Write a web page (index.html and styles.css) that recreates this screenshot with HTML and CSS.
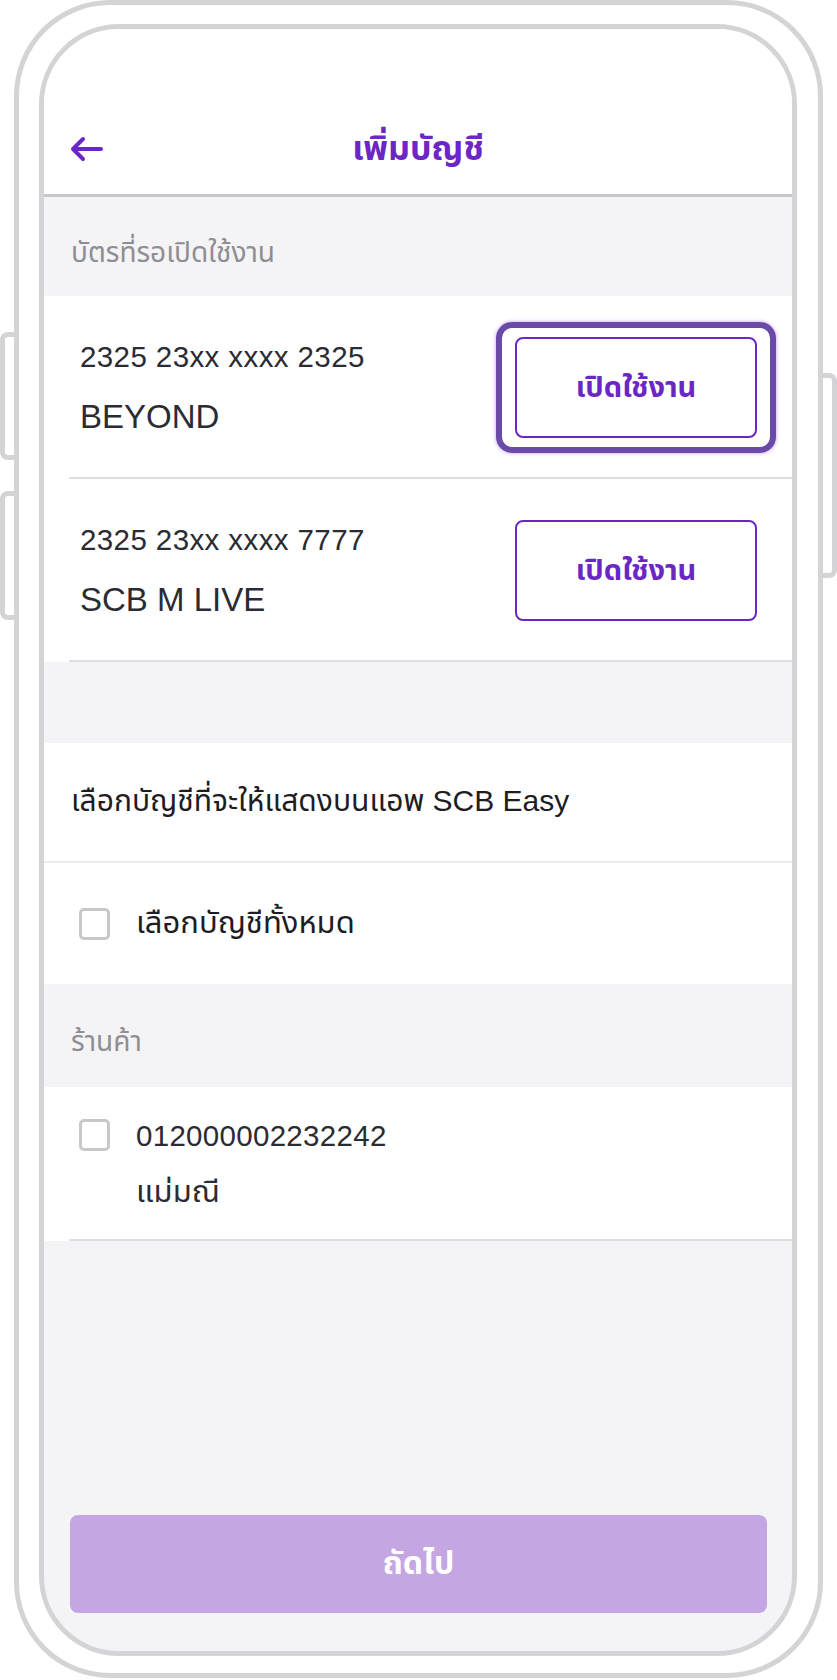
FILE: index.html
```html
<!DOCTYPE html>
<html lang="th">
<head>
  <meta charset="UTF-8" />
  <title>เพิ่มบัญชี</title>
  <link rel="stylesheet" href="styles.css">
</head>
<body>
  <div class="phone">
    <span class="side-btn left top"></span>
    <span class="side-btn left bottom"></span>
    <span class="side-btn right"></span>

    <div class="screen">
      <!-- หัวข้อ -->
      <div class="header">
        <div class="header-row">
          <svg class="back" width="34" height="26" viewBox="0 0 34 26">
            <path d="M3 13 H31 M13 3 L3 13 L13 23" fill="none" stroke="#6b27c6" stroke-width="4" stroke-linecap="round" stroke-linejoin="round"/>
          </svg>
          <h1>เพิ่มบัญชี</h1>
        </div>
      </div>

      <div class="section-label">บัตรที่รอเปิดใช้งาน</div>

      <div class="card-row">
        <div class="card-info">
          <div class="card-no">2325 23xx xxxx 2325</div>
          <div class="card-name">BEYOND</div>
        </div>
        <button class="btn-open focused">เปิดใช้งาน</button>
      </div>

      <div class="card-row">
        <div class="card-info">
          <div class="card-no">2325 23xx xxxx 7777</div>
          <div class="card-name">SCB M LIVE</div>
        </div>
        <button class="btn-open">เปิดใช้งาน</button>
      </div>

      <div class="spacer"></div>

      <div class="title-row">เลือกบัญชีที่จะให้แสดงบนแอพ SCB Easy</div>

      <div class="check-row">
        <span class="checkbox"></span>
        <span class="check-text">เลือกบัญชีทั้งหมด</span>
      </div>

      <div class="section-label shop">ร้านค้า</div>

      <div class="shop-row">
        <span class="checkbox"></span>
        <div class="shop-info">
          <div class="shop-no">012000002232242</div>
          <div class="shop-name">แม่มณี</div>
        </div>
      </div>

      <div class="fill"></div>

      <div class="footer">
        <button class="btn-next">ถัดไป</button>
      </div>
    </div>
  </div>
</body>
</html>
```

FILE: styles.css
```css
body {
  margin: 0;
  background-color: #fff;
  font-family: "Liberation Sans", "Noto Sans Thai", "Noto Sans", sans-serif;
  color: #2b2b33;
}

.phone {
  position: relative;
  box-sizing: border-box;
  width: 809px;
  height: 1678px;
  margin-left: 14px;
  padding: 19px 21px 17px 20px;
  border: 5px solid #d4d4d6;
  border-radius: 96px;
  background-color: #fff;
}

.side-btn {
  position: absolute;
  width: 14px;
  border: 5px solid #d4d4d6;
  background-color: #fff;
  box-sizing: border-box;
}

.side-btn.left {
  left: -19px;
  border-right: none;
  border-radius: 8px 0 0 8px;
}

.side-btn.left.top {
  top: 327px;
  height: 128px;
}

.side-btn.left.bottom {
  top: 486px;
  height: 129px;
}

.side-btn.right {
  right: -19px;
  top: 368px;
  height: 205px;
  border-left: none;
  border-radius: 0 8px 8px 0;
}

.screen {
  box-sizing: border-box;
  height: 100%;
  border: 5px solid #d4d4d6;
  border-radius: 80px;
  overflow: hidden;
  background-color: #f4f4f6;
  display: flex;
  flex-direction: column;
}

.header {
  background-color: #fff;
  height: 168px;
  padding-top: 75px;
  box-sizing: border-box;
  border-bottom: 3px solid #c8c8cc;
  flex-shrink: 0;
}

.header-row {
  position: relative;
  height: 90px;
  display: flex;
  align-items: center;
  justify-content: center;
}

.back {
  position: absolute;
  left: 26px;
  top: 32px;
}

h1 {
  margin: 0;
  font-size: 34px;
  font-weight: bold;
  color: #6b27c6;
}

.section-label {
  height: 99px;
  box-sizing: border-box;
  padding: 35px 0 0 27px;
  font-size: 28px;
  color: #8e8e93;
  flex-shrink: 0;
}

.section-label.shop {
  height: 103px;
  padding-top: 37px;
}

.card-row {
  height: 183px;
  box-sizing: border-box;
  display: flex;
  align-items: center;
  justify-content: space-between;
  padding: 0 35px 0 36px;
  background-color: #fff;
  flex-shrink: 0;
  background-image: linear-gradient(#dfdfe3, #dfdfe3);
  background-size: calc(100% - 25px) 2px;
  background-position: right bottom;
  background-repeat: no-repeat;
}

.card-no {
  font-size: 29.5px;
  letter-spacing: 0.4px;
}

.card-name {
  margin-top: 24px;
  font-size: 33px;
}

.btn-open {
  position: relative;
  width: 242px;
  height: 101px;
  border: 2px solid #6b27c6;
  border-radius: 8px;
  background-color: #fff;
  color: #6b27c6;
  font-family: inherit;
  font-size: 29px;
  font-weight: bold;
}

.btn-open.focused::after {
  content: "";
  position: absolute;
  top: -17px;
  bottom: -17px;
  left: -21px;
  right: -21px;
  border: 6px solid #6a4aa8;
  border-radius: 16px;
  box-shadow: 0 0 4px #c79cf2;
}

.spacer {
  height: 81px;
  flex-shrink: 0;
}

.title-row {
  height: 120px;
  box-sizing: border-box;
  display: flex;
  align-items: center;
  padding-left: 27px;
  background-color: #fff;
  border-bottom: 2px solid #ebebef;
  font-size: 30px;
  color: #1d1d22;
  flex-shrink: 0;
}

.check-row {
  height: 121px;
  box-sizing: border-box;
  display: flex;
  align-items: center;
  padding-left: 35px;
  background-color: #fff;
  font-size: 31px;
  color: #1d1d22;
  flex-shrink: 0;
}

.checkbox {
  width: 31px;
  height: 32px;
  box-sizing: border-box;
  border: 3px solid #c8c8cc;
  border-radius: 5px;
  flex-shrink: 0;
}

.check-text {
  margin-left: 26px;
}

.shop-row {
  height: 154px;
  box-sizing: border-box;
  display: flex;
  align-items: flex-start;
  padding: 32px 0 0 35px;
  background-color: #fff;
  flex-shrink: 0;
  background-image: linear-gradient(#dfdfe3, #dfdfe3);
  background-size: calc(100% - 25px) 2px;
  background-position: right bottom;
  background-repeat: no-repeat;
}

.shop-info {
  margin-left: 26px;
}

.shop-no {
  font-size: 29.5px;
  letter-spacing: 0.3px;
}

.shop-name {
  margin-top: 16px;
  font-size: 31px;
}

.fill {
  flex: 1;
}

.footer {
  padding: 0 25px 38px 26px;
}

.btn-next {
  width: 100%;
  height: 98px;
  border: none;
  border-radius: 8px;
  background-color: #c4a6e2;
  color: #fff;
  font-family: inherit;
  font-size: 32px;
  font-weight: bold;
}
```
